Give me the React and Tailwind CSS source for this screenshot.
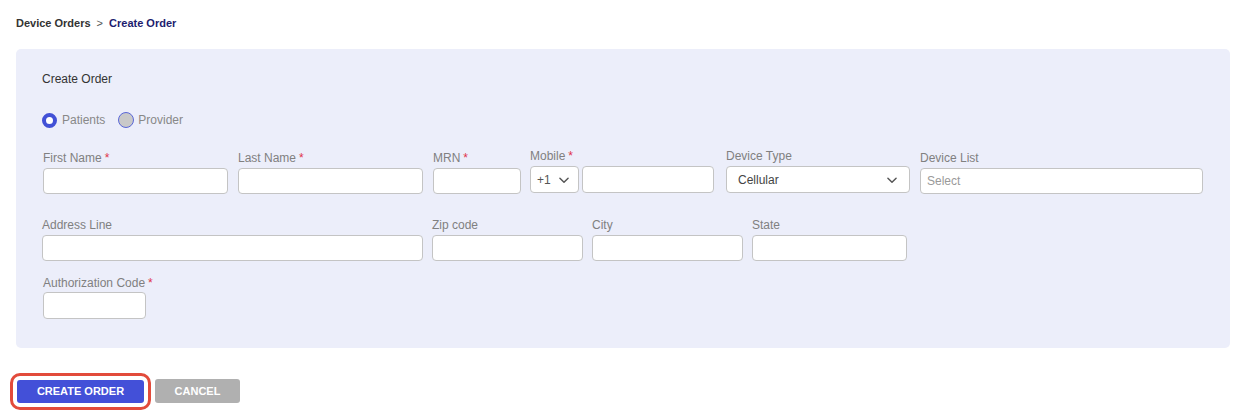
import React from "react";

function Chevron() {
  return (
    <svg width="14" height="14" viewBox="0 0 24 24" fill="none" stroke="#555" strokeWidth="2.5" strokeLinecap="round" strokeLinejoin="round">
      <path d="M5 9l7 7 7-7" />
    </svg>
  );
}

function Label({ children, req, mb = "mb-[3px]" }) {
  return (
    <div className={`text-[12px] leading-[15px] text-[#808080] ${mb} whitespace-nowrap`}>
      {children}
      {req && <span className="text-[#e0334a] ml-[3px]">*</span>}
    </div>
  );
}

function Input({ w, h = "h-[26px]", placeholder }) {
  return (
    <div className={`${w} ${h} bg-white border border-[#c4c4c4] rounded-[4px] flex items-center px-[6px] text-[12px] text-[#9a9a9a]`}>
      {placeholder}
    </div>
  );
}

export default function App() {
  return (
    <div className="min-h-[414px] bg-white px-4 pt-[17px]" style={{ fontFamily: '"Liberation Sans", Arial, sans-serif' }}>
      <div className="flex items-center text-[11px] leading-[13px] font-bold">
        <span className="text-[#333]">Device Orders</span>
        <span className="text-[#555] font-normal mx-[6px]">&gt;</span>
        <span className="text-[#1c1c6e]">Create Order</span>
      </div>

      <div className="mt-[19px] w-[1214px] h-[299px] bg-[#eceefa] rounded-[5px] pl-[26px] pt-[23px]">
        <div className="text-[12px] leading-[14px] text-[#333]">Create Order</div>

        <div className="flex items-center mt-[25px] text-[12px] text-[#888]">
          <div className="w-[15px] h-[15px] rounded-full border-[4px] border-[#4251d6] bg-white" />
          <span className="ml-[5px]">Patients</span>
          <div className="ml-[13px] w-[16px] h-[16px] rounded-full border border-[#5a67d8] bg-[#c9c9c9]" />
          <span className="ml-[4px]">Provider</span>
        </div>

        <div className="flex items-start mt-[22px] pl-[1px]">
          <div>
            <Label req mb="mb-[2px]">First Name</Label>
            <Input w="w-[185px]" />
          </div>
          <div className="ml-[10px]">
            <Label req mb="mb-[2px]">Last Name</Label>
            <Input w="w-[185px]" />
          </div>
          <div className="ml-[10px]">
            <Label req mb="mb-[2px]">MRN</Label>
            <Input w="w-[88px]" />
          </div>
          <div className="ml-[9px] -mt-[2px]">
            <Label req mb="mb-[2px]">Mobile</Label>
            <div className="flex mt-[1px]">
              <div className="w-[49px] h-[27px] bg-white border border-[#c4c4c4] rounded-[4px] flex items-center justify-between pl-[6px] pr-[7px] text-[12px] text-[#555]">
                <span>+1</span>
                <Chevron />
              </div>
              <div className="ml-[3px] w-[132px] h-[27px] bg-white border border-[#c4c4c4] rounded-[4px]" />
            </div>
          </div>
          <div className="ml-[12px] -mt-[2px]">
            <Label mb="mb-[2px]">Device Type</Label>
            <div className="w-[184px] h-[27px] bg-white border border-[#c4c4c4] rounded-[4px] flex items-center justify-between pl-[11px] pr-[10px] text-[12px] text-[#444]">
              <span>Cellular</span>
              <Chevron />
            </div>
          </div>
          <div className="ml-[10px]">
            <Label mb="mb-[2px]">Device List</Label>
            <Input w="w-[283px]" placeholder="Select" />
          </div>
        </div>

        <div className="flex items-start mt-[24px]">
          <div>
            <Label mb="mb-[2px]">Address Line</Label>
            <Input w="w-[381px]" />
          </div>
          <div className="ml-[9px]">
            <Label mb="mb-[2px]">Zip code</Label>
            <Input w="w-[151px]" />
          </div>
          <div className="ml-[9px]">
            <Label mb="mb-[2px]">City</Label>
            <Input w="w-[151px]" />
          </div>
          <div className="ml-[9px]">
            <Label mb="mb-[2px]">State</Label>
            <Input w="w-[155px]" />
          </div>
        </div>

        <div className="mt-[15px] pl-[1px]">
          <Label req mb="mb-[1px]">Authorization Code</Label>
          <Input w="w-[103px]" h="h-[27px]" />
        </div>
      </div>

      <div className="flex items-start mt-[31px] pl-[1px]">
        <button className="mt-[1px] w-[127px] h-[23px] bg-[#4350d8] text-white text-[11px] font-bold rounded-[3px] outline-[3px] outline-solid outline-[#e24b3b] outline-offset-[4px]">
          CREATE ORDER
        </button>
        <button className="ml-[11px] w-[85px] h-[24px] bg-[#b0b0b0] text-white text-[11px] font-bold rounded-[3px]">
          CANCEL
        </button>
      </div>
    </div>
  );
}
